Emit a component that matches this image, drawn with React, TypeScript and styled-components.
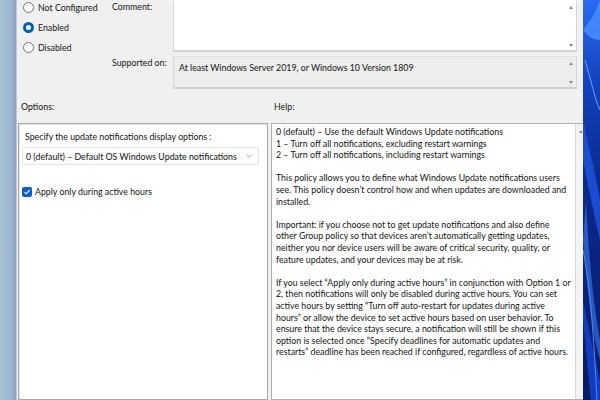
import React from 'react'
import styled, { createGlobalStyle } from 'styled-components'

const GlobalStyle = createGlobalStyle`
  html, body {
    margin: 0;
    padding: 0;
    width: 600px;
    height: 400px;
    overflow: hidden;
    background: #f0f0f0;
  }
  * {
    box-sizing: border-box;
  }
`

const TEXT = '#141414'
const FONT = `'Lato', 'Open Sans', 'Liberation Sans', sans-serif`

const Screen = styled.div`
  display: flex;
  width: 600px;
  height: 400px;
  overflow: hidden;
  font-family: ${FONT};
  font-size: 9px;
  color: ${TEXT};
`

const SideStrip = styled.div`
  width: 16px;
  flex: none;
  background: linear-gradient(90deg, #a9c0d6 0%, #9db6ce 70%, #8aa3bd 100%);
`

const Dialog = styled.div`
  flex: 1;
  display: flex;
  flex-direction: column;
  background: #f0f0f0;
  border-left: 1px solid #c4c9cf;
  padding: 0 6px 0 1px;
  min-width: 0;
`

const TopArea = styled.div`
  display: flex;
  height: 90px;
`

const RadioGroup = styled.div`
  width: 94px;
  display: flex;
  flex-direction: column;
  gap: 9px;
  padding: 2px 0 0 5px;
`

const RadioRow = styled.label`
  display: flex;
  align-items: center;
  gap: 4px;
  height: 11px;
  font-size: 8.8px;
`

const RadioDot = styled.span<{ $on?: boolean }>`
  width: 11px;
  height: 11px;
  border-radius: 50%;
  flex: none;
  border: ${(p) => (p.$on ? '3px solid #005fb8' : '1px solid #6f6f6f')};
  background: #fff;
`

const Fields = styled.div`
  flex: 1;
  display: grid;
  grid-template-columns: 61px 1fr;
  grid-template-rows: 52px 33px;
  row-gap: 4px;
`

const FieldLabel = styled.div`
  font-size: 8.8px;
  padding-top: 1px;
`

const FieldBox = styled.div<{ $muted?: boolean }>`
  display: flex;
  background: ${(p) => (p.$muted ? '#ededed' : '#ffffff')};
  border: 1px solid #d6d6d6;
  border-top-color: ${(p) => (p.$muted ? '#e2e2e2' : 'transparent')};
  border-bottom: 2px solid #d2d2d2;
`

const FieldText = styled.div`
  flex: 1;
  padding: 5px 5px;
  font-size: 8.8px;
`

const MiniScroll = styled.div`
  width: 10px;
  display: flex;
  flex-direction: column;
  justify-content: space-between;
  align-items: center;
  padding: 5px 0 3px;
`

const Arrow = styled.span<{ $down?: boolean }>`
  width: 0;
  height: 0;
  border-left: 2px solid transparent;
  border-right: 2px solid transparent;
  ${(p) =>
    p.$down ? 'border-top: 3px solid #8a8a8a;' : 'border-bottom: 3px solid #8a8a8a;'}
`

const HeadRow = styled.div`
  display: grid;
  grid-template-columns: 253px 1fr;
  height: 33px;
  align-items: center;
  font-size: 8.8px;
  padding: 0 0 0 3px;
`

const Panels = styled.div`
  flex: 1;
  display: grid;
  grid-template-columns: 250px 1fr;
  gap: 3px;
`

const OptionsPanel = styled.div`
  background: #fff;
  border: 1px solid #a8a8a8;
  box-shadow: inset 1px 1px 0 #e4e4e4;
  padding: 6px 8px 0 3px;
  display: flex;
  flex-direction: column;
`

const OptionCaption = styled.div`
  font-size: 8.8px;
  padding: 1px 0 0 3px;
`

const Select = styled.div`
  margin-top: 5px;
  height: 18px;
  border: 1px solid #e4e4e4;
  border-radius: 2px;
  background: #fbfbfb;
  display: flex;
  align-items: center;
  justify-content: space-between;
  padding: 0 6px 0 3px;
  font-size: 8.8px;
  white-space: nowrap;
`

const Chevron = styled.svg`
  width: 6px;
  height: 4px;
`

const CheckRow = styled.label`
  display: flex;
  align-items: center;
  gap: 3px;
  margin-top: 21px;
  font-size: 8.8px;
`

const CheckBox = styled.span`
  width: 10px;
  height: 10px;
  border-radius: 2px;
  background: #0f5fc0;
  display: flex;
  align-items: center;
  justify-content: center;
  flex: none;
`

const HelpPanel = styled.div`
  display: flex;
  background: #f3f3f3;
  border: 1px solid #b0b0b0;
`

const HelpText = styled.div`
  flex: 1;
  background: #fff;
  border-right: 1px solid #d8d8d8;
  padding: 2px 4px;
  font-size: 8.8px;
  line-height: 11.6px;
  white-space: nowrap;
`

const Para = styled.p`
  margin: 0 0 11.6px;
`

const HelpScroll = styled.div`
  width: 10px;
  display: flex;
  justify-content: center;
  padding-top: 6px;
`

const Wallpaper = styled.div`
  width: 17px;
  flex: none;
  background: #0b1f6b;
  overflow: hidden;
`

const help: string[][] = [
  [
    '0 (default) – Use the default Windows Update notifications',
    '1 – Turn off all notifications, excluding restart warnings',
    '2 – Turn off all notifications, including restart warnings',
  ],
  [
    'This policy allows you to define what Windows Update notifications users',
    'see. This policy doesn’t control how and when updates are downloaded and',
    'installed.',
  ],
  [
    'Important: if you choose not to get update notifications and also define',
    'other Group policy so that devices aren’t automatically getting updates,',
    'neither you nor device users will be aware of critical security, quality, or',
    'feature updates, and your devices may be at risk.',
  ],
  [
    'If you select “Apply only during active hours” in conjunction with Option 1 or',
    '2, then notifications will only be disabled during active hours. You can set',
    'active hours by setting “Turn off auto-restart for updates during active',
    'hours” or allow the device to set active hours based on user behavior. To',
    'ensure that the device stays secure, a notification will still be shown if this',
    'option is selected once “Specify deadlines for automatic updates and',
    'restarts” deadline has been reached if configured, regardless of active hours.',
  ],
]

const radios = [
  { label: 'Not Configured', on: false },
  { label: 'Enabled', on: true },
  { label: 'Disabled', on: false },
]

const App = (): React.ReactElement => (
  <>
    <GlobalStyle />
    <Screen>
      <SideStrip />
      <Dialog>
        <TopArea>
          <RadioGroup>
            {radios.map(({ label, on }) => (
              <RadioRow key={label}>
                <RadioDot $on={on} />
                {label}
              </RadioRow>
            ))}
          </RadioGroup>
          <Fields>
            <FieldLabel>Comment:</FieldLabel>
            <FieldBox>
              <FieldText />
              <MiniScroll>
                <Arrow />
                <Arrow $down />
              </MiniScroll>
            </FieldBox>
            <FieldLabel>Supported on:</FieldLabel>
            <FieldBox $muted>
              <FieldText>At least Windows Server 2019, or Windows 10 Version 1809</FieldText>
              <MiniScroll>
                <Arrow />
                <Arrow $down />
              </MiniScroll>
            </FieldBox>
          </Fields>
        </TopArea>
        <HeadRow>
          <span>Options:</span>
          <span>Help:</span>
        </HeadRow>
        <Panels>
          <OptionsPanel>
            <OptionCaption>Specify the update notifications display options :</OptionCaption>
            <Select>
              <span>0 (default) – Default OS Windows Update notifications</span>
              <Chevron viewBox="0 0 6 4">
                <path d="M0.5 0.8 L3 3.2 L5.5 0.8" fill="none" stroke="#9a9a9a" strokeWidth="0.8" />
              </Chevron>
            </Select>
            <CheckRow>
              <CheckBox>
                <svg width="8" height="8" viewBox="0 0 8 8">
                  <path d="M1.5 4.2 L3.2 5.8 L6.6 2.2" fill="none" stroke="#fff" strokeWidth="1.1" />
                </svg>
              </CheckBox>
              Apply only during active hours
            </CheckRow>
          </OptionsPanel>
          <HelpPanel>
            <HelpText>
              {help.map((para, i) => (
                <Para key={i}>
                  {para.map((line, j) => (
                    <React.Fragment key={j}>
                      {line}
                      {j < para.length - 1 && <br />}
                    </React.Fragment>
                  ))}
                </Para>
              ))}
            </HelpText>
            <HelpScroll>
              <Arrow />
            </HelpScroll>
          </HelpPanel>
        </Panels>
      </Dialog>
      <Wallpaper>
        <svg width="17" height="400" viewBox="0 0 17 400">
          <defs>
            <linearGradient id="wp" x1="0" y1="0" x2="0" y2="1">
              <stop offset="0" stopColor="#2a6cf0" />
              <stop offset="0.2" stopColor="#1443c0" />
              <stop offset="0.45" stopColor="#0b2a8e" />
              <stop offset="1" stopColor="#081a66" />
            </linearGradient>
          </defs>
          <rect width="17" height="400" fill="url(#wp)" />
          <path d="M0 30 C8 20 14 10 17 0 L17 40 C10 40 4 36 0 30Z" fill="#4a90ff" opacity="0.8" />
          <path d="M0 120 C6 150 12 170 17 200 L17 240 C10 210 4 180 0 160Z" fill="#1d55e0" opacity="0.8" />
          <path d="M3 200 C6 260 10 300 17 340 L17 360 C8 330 4 280 0 240Z" fill="#3b7df5" opacity="0.6" />
          <path d="M0 300 C6 330 12 360 17 380 L17 400 L8 400 C5 370 2 340 0 320Z" fill="#1440c8" opacity="0.9" />
          <path d="M2 60 C8 80 12 100 17 110" stroke="#6aa2ff" strokeWidth="1" fill="none" />
          <path d="M0 250 C6 280 10 320 14 400" stroke="#4d8cff" strokeWidth="1" fill="none" />
        </svg>
      </Wallpaper>
    </Screen>
  </>
)

export default App
